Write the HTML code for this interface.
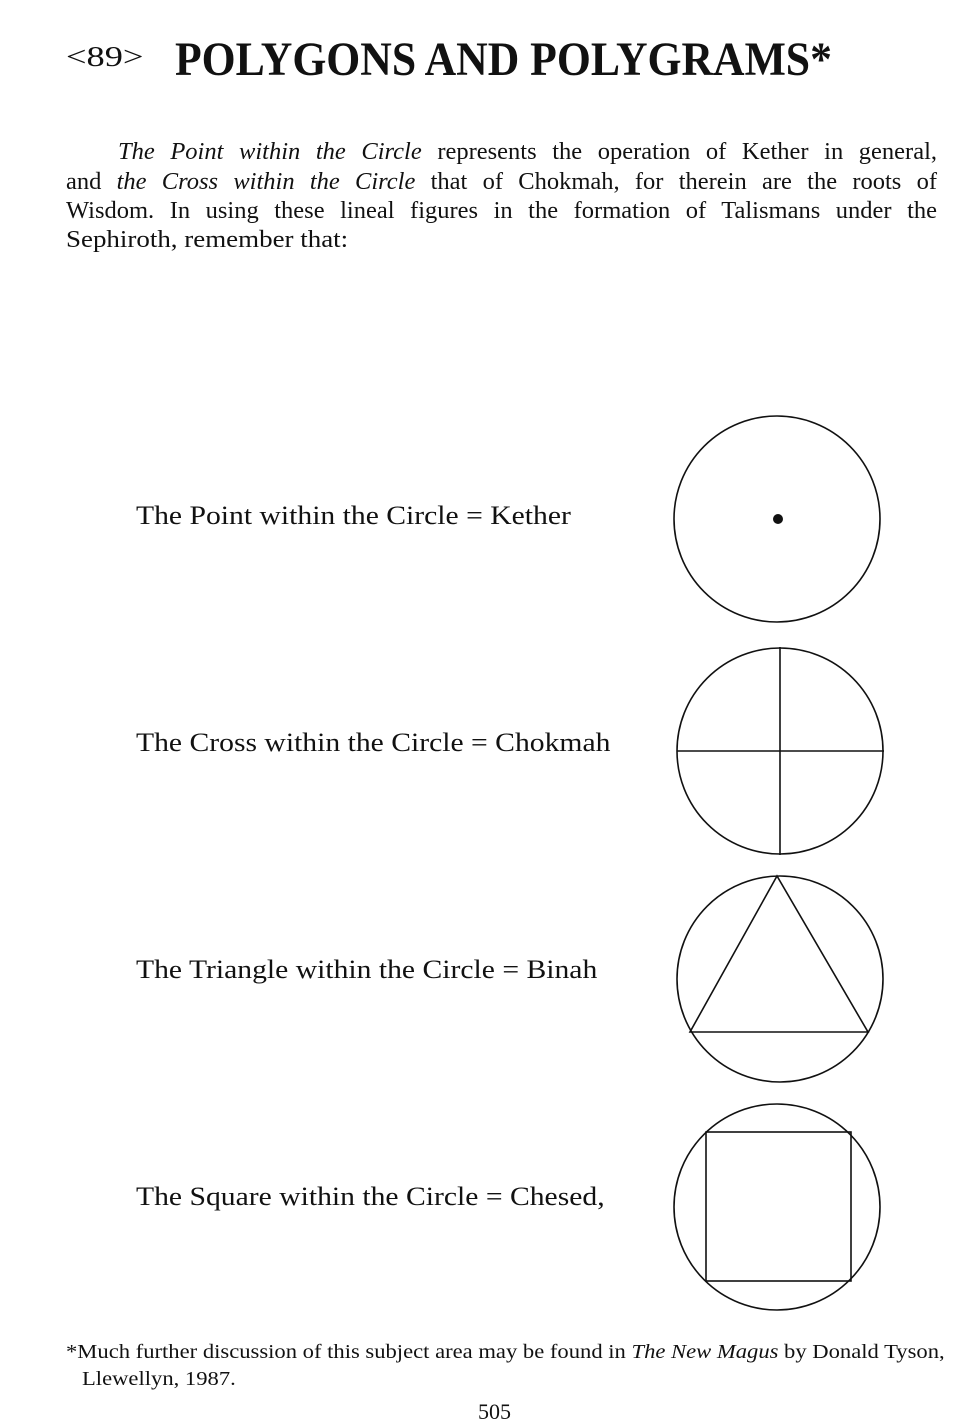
<!DOCTYPE html>
<html><head><meta charset="utf-8"><style>
body{margin:0;width:959px;height:1409px;background:#fff;position:relative;overflow:hidden;font-family:"Liberation Serif",serif;color:#111}
.a{position:absolute;white-space:nowrap;transform-origin:0 0}
.j{position:absolute;left:66px;width:871px;text-align:justify;text-align-last:justify;font-size:24.5px;white-space:nowrap}
.l{font-size:26px;left:136px;transform:scaleX(1.14)}
</style></head><body>
<div class="a" style="left:66px;top:42px;font-size:28px;transform:scaleX(1.3)">&lt;89&gt;</div>
<div class="a" style="left:175px;top:32px;font-size:48px;font-weight:bold;transform:scaleX(0.91)">POLYGONS AND POLYGRAMS*</div>
<div class="j" style="top:138px;left:118px;width:819px"><i>The Point within the Circle</i> represents the operation of Kether in general,</div>
<div class="j" style="top:168px"><span>and <i>the Cross within the Circle</i> that of Chokmah, for therein are the roots of</span></div>
<div class="j" style="top:197px">Wisdom. In using these lineal figures in the formation of Talismans under the</div>
<div class="a" style="left:66px;top:226px;font-size:24.5px;transform:scaleX(1.1)">Sephiroth, remember that:</div>
<div class="a l" style="top:501px">The Point within the Circle = Kether</div>
<div class="a l" style="top:728px">The Cross within the Circle = Chokmah</div>
<div class="a l" style="top:955px">The Triangle within the Circle = Binah</div>
<div class="a l" style="top:1182px">The Square within the Circle = Chesed,</div>
<svg class="a" style="left:0;top:0" width="959" height="1409" fill="none" stroke="#111" stroke-width="1.6">
<circle cx="777" cy="519" r="103"/><circle cx="778" cy="519" r="5" fill="#111" stroke="none"/>
<circle cx="780" cy="751" r="103"/><line x1="677" y1="751" x2="884" y2="751"/><line x1="780" y1="647" x2="780" y2="855"/>
<circle cx="780" cy="979" r="103"/><polygon points="777,876 690,1032 868,1032"/>
<circle cx="777" cy="1207" r="103"/><rect x="706" y="1132" width="145" height="149"/>
</svg>
<div class="a" style="left:66px;top:1341px;font-size:20px;transform:scaleX(1.13)">*Much further discussion of this subject area may be found in <i>The New Magus</i> by Donald Tyson,</div>
<div class="a" style="left:82px;top:1368px;font-size:20px;transform:scaleX(1.13)">Llewellyn, 1987.</div>
<div class="a" style="left:478px;top:1399px;font-size:22px">505</div>
</body></html>
